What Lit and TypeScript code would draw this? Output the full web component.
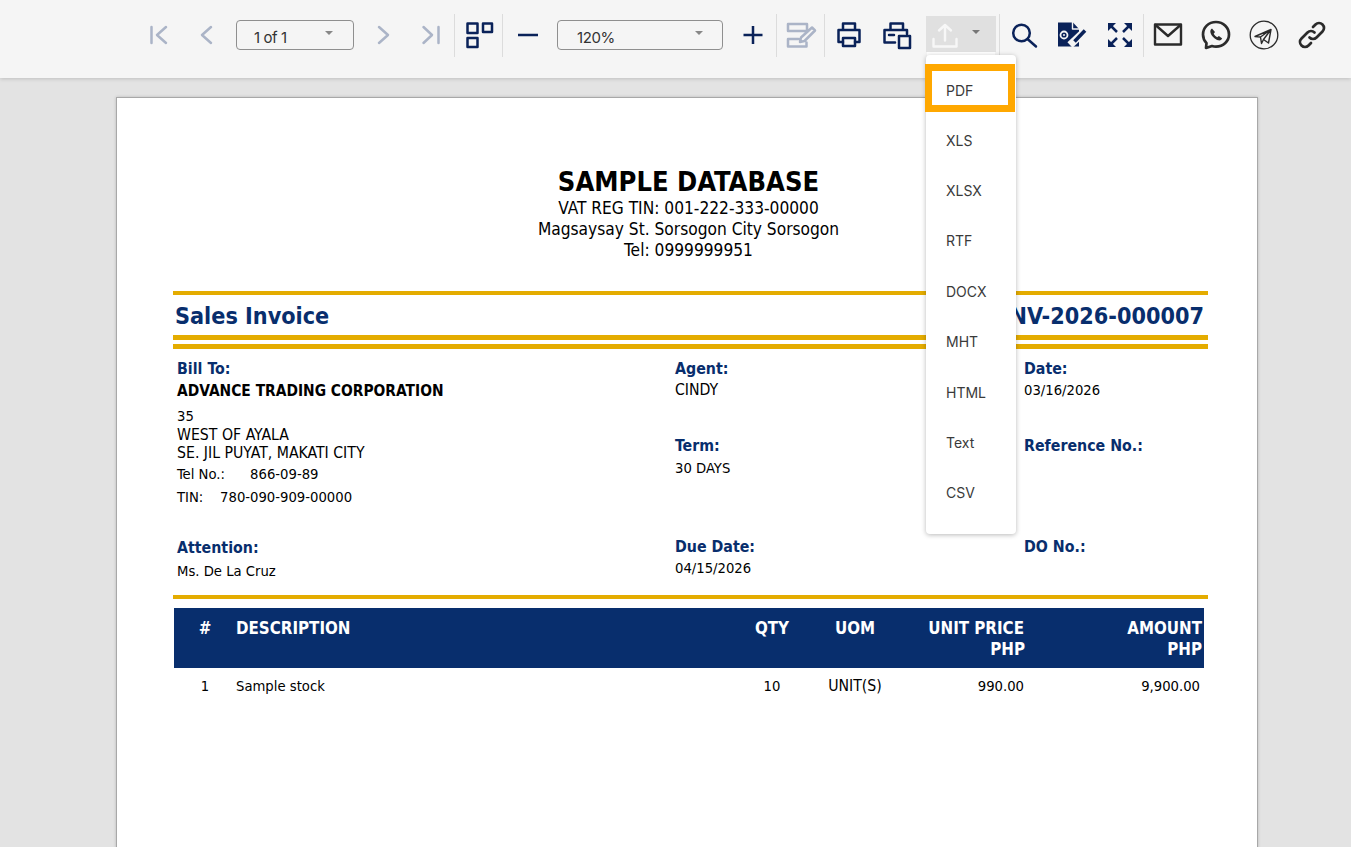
import { LitElement, html, css, svg } from "lit";
import { customElement } from "lit/decorators.js";

const icon = (body: unknown, cls = "navy") =>
  html`<span class="btn"><svg class="${cls}" width="32" height="32" viewBox="0 0 32 32" fill="none" stroke-linecap="round" stroke-linejoin="round">${body}</svg></span>`;

const left = [
  { t: "Bill To:", k: "label", g: 0 },
  { t: "ADVANCE TRADING CORPORATION", k: "strong", g: 4 },
  { t: "35", k: "mix", g: 7 },
  { t: "WEST OF AYALA", k: "", g: 1 },
  { t: "SE. JIL PUYAT, MAKATI CITY", k: "", g: 0 },
  { t: "Tel No.:\u00a0\u00a0\u00a0\u00a0\u00a0\u00a0866-09-89", k: "mix", g: 3 },
  { t: "TIN:\u00a0\u00a0\u00a0\u00a0780-090-909-00000", k: "mix", g: 5 },
  { t: "Attention:", k: "label", g: 33 },
  { t: "Ms. De La Cruz", k: "mix", g: 5 },
];
const mid = [
  { t: "Agent:", k: "label", g: 0 },
  { t: "CINDY", k: "", g: 3 },
  { t: "Term:", k: "label", g: 38 },
  { t: "30 DAYS", k: "mix", g: 4 },
  { t: "Due Date:", k: "label", g: 61 },
  { t: "04/15/2026", k: "mix", g: 3 },
];
const right = [
  { t: "Date:", k: "label", g: 0 },
  { t: "03/16/2026", k: "mix", g: 3 },
  { t: "Reference No.:", k: "label", g: 38 },
  { t: "DO No.:", k: "label", g: 83 },
];
const formats = ["PDF", "XLS", "XLSX", "RTF", "DOCX", "MHT", "HTML", "Text", "CSV"];

const corner = (a: string) => svg`<path d="${a}" fill="#0a2259" stroke="none"/>`;

@customElement("app-root")
export class AppRoot extends LitElement {
  static styles = css`
    :host { display: block; height: 847px; overflow: hidden; background: #e3e3e3; position: relative; }
    .toolbar { height: 78px; box-sizing: border-box; background: #f5f5f5; padding: 14px 0 0 134px; display: flex; align-items: flex-start; box-shadow: 0 1px 4px rgba(0,0,0,.16); position: relative; z-index: 2; font-family: Inter, sans-serif; }
    .btn { width: 48px; height: 42px; display: flex; align-items: center; justify-content: center; flex: none; }
    .navy { stroke: #0a2259; stroke-width: 2.5; }
    .off { stroke: #abb4c7; stroke-width: 2.5; }
    .dark { stroke: #2b2b2b; stroke-width: 2.4; }
    .sep { width: 1px; height: 43px; background: #dcdcdc; flex: none; margin-left: -1px; }
    .sep.wide { margin-right: 1px; }
    .sep.nudge { margin-left: -2px; margin-right: 1px; }
    .sep.after { margin: 0 0 0 3px; }
    .select { height: 30px; box-sizing: border-box; padding-top: 5px; border: 1.5px solid #8f8f8f; border-radius: 4px; display: flex; align-items: center; font-size: 15px; color: #333; letter-spacing: -.4px; position: relative; flex: none; }
    .select::after { content: ""; position: absolute; top: 10px; border-left: 4px solid transparent; border-right: 4px solid transparent; border-top: 4px solid #888; }
    .page { width: 118px; margin: 6px 5px 0 6px; padding-left: 17px; }
    .page::after { right: 20px; }
    .zoom { width: 166px; margin: 6px 6px 0 5px; padding-left: 19px; }
    .zoom::after { right: 19px; }
    .export { width: 70px; height: 36px; margin: 2px 0 0 5px; background: #e0e0e0; display: flex; align-items: center; flex: none; position: relative; padding-left: 3px; box-sizing: border-box; }
    .caret { margin-left: 11px; border-left: 4.5px solid transparent; border-right: 4.5px solid transparent; border-top: 4.5px solid #777; margin-top: -4px; }
    .menu { position: absolute; left: 926px; top: 55px; width: 90px; height: 479px; box-sizing: border-box; padding-top: 11px; background: #fff; border-radius: 4px; box-shadow: 0 1px 5px rgba(0,0,0,.28); z-index: 3; font-family: Inter, sans-serif; font-size: 14px; color: #3a3a3a; }
    .patch { position: absolute; left: 927px; top: 52px; width: 68px; height: 4px; background: #fff; z-index: 3; }
    .item { height: 50.4px; line-height: 50.4px; padding-left: 20px; box-sizing: border-box; }
    .item.on { line-height: 39px; margin: -2px 0 3.6px -1px; height: 48px; width: 90px; border: 7px solid #ffa800; padding-left: 14px; }
    .paper { position: absolute; left: 116px; top: 97px; width: 1142px; height: 800px; box-sizing: border-box; background: #fff; border: 1px solid #a8a8a8; box-shadow: 0 0 3px rgba(0,0,0,.18); padding: 63px 49px 0 56px; font-family: "DejaVu Sans", sans-serif; font-stretch: condensed; font-size: 15.7px; color: #000; }
    .head { text-align: center; height: 130px; margin-bottom: -4px; padding-right: 4px; }
    .title { font-weight: 700; font-size: 27.1px; line-height: 34px; height: 33px; margin: 4px 0 0; }
    .addr { font-size: 17.2px; line-height: 21px; }
    .gold { height: 4px; background: #e4ac00; }
    .bar { display: flex; justify-content: space-between; align-items: center; height: 40px; padding: 0 4px 0 2px; color: #082e6d; font-weight: 700; font-size: 23.2px; }
    .gold.thick { height: 5px; }
    .gap4 { margin-top: 4px; }
    .fields { display: grid; grid-template-columns: 498px 349px 1fr; height: 246px; box-sizing: border-box; padding: 11px 0 0 4px; }
    .line { line-height: 18px; white-space: nowrap; }
    .mix { font-size: 14.7px; }
    .label { color: #082e6d; font-weight: 700; font-size: 15.8px; }
    .strong { font-weight: 700; font-size: 15.4px; }
    .table { margin: 9px 4px 0 1px; }
    .thead { background: #082e6d; color: #fff; font-weight: 700; height: 60px; font-size: 16.8px; }
    .row { display: grid; grid-template-columns: 62px 512px 48px 118px 111px 1fr; line-height: 20px; }
    .thead .row { padding-top: 10px; }
    .thead .row + .row { padding-top: 1px; }
    .c { text-align: center; }
    .r { text-align: right; }
    .r.end { padding-right: 2px; }
    .body { padding-top: 8px; font-size: 14.7px; }
    .body .caps { font-size: 15.7px; }
    .body .r.end { padding-right: 4px; }
    .r.price { padding-right: 1px; }
    .r.price.php { padding-right: 0; }
  `;

  private renderLines(lines: { t: string; k: string; g: number }[]) {
    return html`<div>${lines.map((l) => html`<div class="line ${l.k}" style="margin-top:${l.g}px">${l.t}</div>`)}</div>`;
  }

  render() {
    return html`
      <div class="toolbar">
        ${icon(svg`<path d="M9.5 8v16M24 8l-9 8 9 8"/>`, "off")}
        ${icon(svg`<path d="M21 8l-9 8 9 8"/>`, "off")}
        <div class="select page">1 of 1</div>
        ${icon(svg`<path d="M12 8l9 8-9 8"/>`, "off")}
        ${icon(svg`<path d="M8.5 8l8.5 8-8.5 8M23.5 8v16"/>`, "off")}
        <span class="sep wide"></span>
        ${icon(svg`<rect x="3.5" y="4.5" width="10" height="9.5"/><rect x="19" y="4.5" width="9" height="8.5"/><rect x="3.5" y="19" width="10" height="9"/>`)}
        <span class="sep nudge"></span>
        ${icon(svg`<path d="M6 16h20" stroke-linecap="butt"/>`)}
        <div class="select zoom">120%</div>
        ${icon(svg`<path d="M6.5 16h19M16 7v18" stroke-linecap="butt"/>`)}
        <span class="sep"></span>
        ${icon(svg`<path d="M3 5h19v7H3zM3 20h10.500M3 20v7.500h18.500v-4M27 8.500l3 3L19.500 22l-4.500 1 1-4.500z"/>`, "off")}
        <span class="sep"></span>
        ${icon(svg`<path d="M10 11V4.500h12V11M10 23H5.500V11h21v12H22"/><rect x="10" y="19" width="12" height="8"/>`)}
        ${icon(svg`<path d="M9.500 11V4.500H22V11M14 23.500H3.500V11H26v4M8 16h5"/><rect x="18" y="17" width="11" height="12"/>`)}
        <div class="export">
          <svg width="32" height="32" viewBox="0 0 32 32" fill="none" stroke="#f7f7f7" stroke-width="2.4" stroke-linecap="round" stroke-linejoin="round"><path d="M4.500 21v7.500h23V21M16 22.500V7M10 12.500L16 7l6 5.500"/></svg>
          <span class="caret"></span>
        </div>
        <span class="sep after"></span>
        ${icon(svg`<circle cx="13.500" cy="14" r="8.300"/><path d="M19.500 20l8.500 7.500"/>`)}
        ${icon(svg`<path d="M2 3.500h15l6 6.500v17.500H2z" fill="#0a2259" stroke="none"/><path d="M16.500 3V10H23.500" stroke="#f5f5f5" stroke-width="1.400" stroke-linecap="butt"/><circle cx="8" cy="16" r="3.500" stroke="#f5f5f5" stroke-width="1.800"/><circle cx="8" cy="16" r="1" fill="#f5f5f5" stroke="none"/><path d="M30 11L14 26" stroke="#f5f5f5" stroke-width="7.500" stroke-linecap="butt"/><path d="M29 11.500L18.500 22.500" stroke-width="3.600" stroke-linecap="butt"/>`)}
        ${icon(svg`${corner("M4 4h8L4 12z")}${corner("M28 4h-8l8 8z")}${corner("M4 28h8l-8-8z")}${corner("M28 28h-8l8-8z")}<path d="M6 6l7 7M26 6l-7 7M6 26l7-7M26 26l-7-7" stroke-linecap="butt"/>`)}
        <span class="sep"></span>
        ${icon(svg`<rect x="3" y="5.500" width="26" height="20"/><path d="M3.500 6L16 17 28.500 6"/>`, "dark")}
        ${icon(svg`<path d="M16 3C8.500 3 3 8.500 3 15.500c0 3.500 1.500 6.500 3.500 8.700L6 29l6-2c1.200.4 2.600.6 4 .6 7.500 0 13-5.600 13-12.100S23.500 3 16 3z" stroke-width="2.700"/><path d="M12 9.500c-1.500 1-2 2.500-1.500 4.300 1 3.300 4.200 6.500 7.500 7.500 2 .5 3.300-.2 4.200-1.800l-3.300-2.500-1.700 1.200c-1.400-.7-2.800-2.100-3.500-3.500l1.300-1.700z" fill="#2b2b2b" stroke="none"/>`, "dark")}
        ${icon(svg`<circle cx="16" cy="16" r="13.800" stroke-width="1.300"/><path d="M7 17.500L23 10.500 20.500 24l-5-3.500-2 4-1-6.500zM12.500 18L23 10.500 15.500 20.500" stroke-width="1.400"/>`, "dark")}
        ${icon(svg`<path stroke-width="2.700" d="M13.500 18.500c2 2 5 2 7 0l6-6c2-2 2-5 0-7s-5-2-7 0l-2.500 2.500M18.500 13.500c-2-2-5-2-7 0l-6 6c-2 2-2 5 0 7s5 2 7 0l2.500-2.500"/>`, "dark")}
      </div>
      <div class="patch"></div>
      <div class="menu">${formats.map((f, i) => html`<div class="item ${i === 0 ? "on" : ""}">${f}</div>`)}</div>
      <div class="paper">
        <div class="head">
          <div class="title">SAMPLE DATABASE</div>
          <div class="addr">VAT REG TIN: 001-222-333-00000</div>
          <div class="addr">Magsaysay St. Sorsogon City Sorsogon</div>
          <div class="addr">Tel: 0999999951</div>
        </div>
        <div class="gold"></div>
        <div class="bar"><span>Sales Invoice</span><span>INV-2026-000007</span></div>
        <div class="gold thick"></div>
        <div class="gold thick gap4"></div>
        <div class="fields">
          ${this.renderLines(left)}${this.renderLines(mid)}${this.renderLines(right)}
        </div>
        <div class="gold"></div>
        <div class="table">
          <div class="thead">
            <div class="row"><span class="c">#</span><span>DESCRIPTION</span><span class="c">QTY</span><span class="c">UOM</span><span class="r price">UNIT PRICE</span><span class="r end">AMOUNT</span></div>
            <div class="row"><span></span><span></span><span></span><span></span><span class="r price php">PHP</span><span class="r end">PHP</span></div>
          </div>
          <div class="row body"><span class="c">1</span><span>Sample stock</span><span class="c">10</span><span class="c caps">UNIT(S)</span><span class="r price">990.00</span><span class="r end">9,900.00</span></div>
        </div>
      </div>
    `;
  }
}
